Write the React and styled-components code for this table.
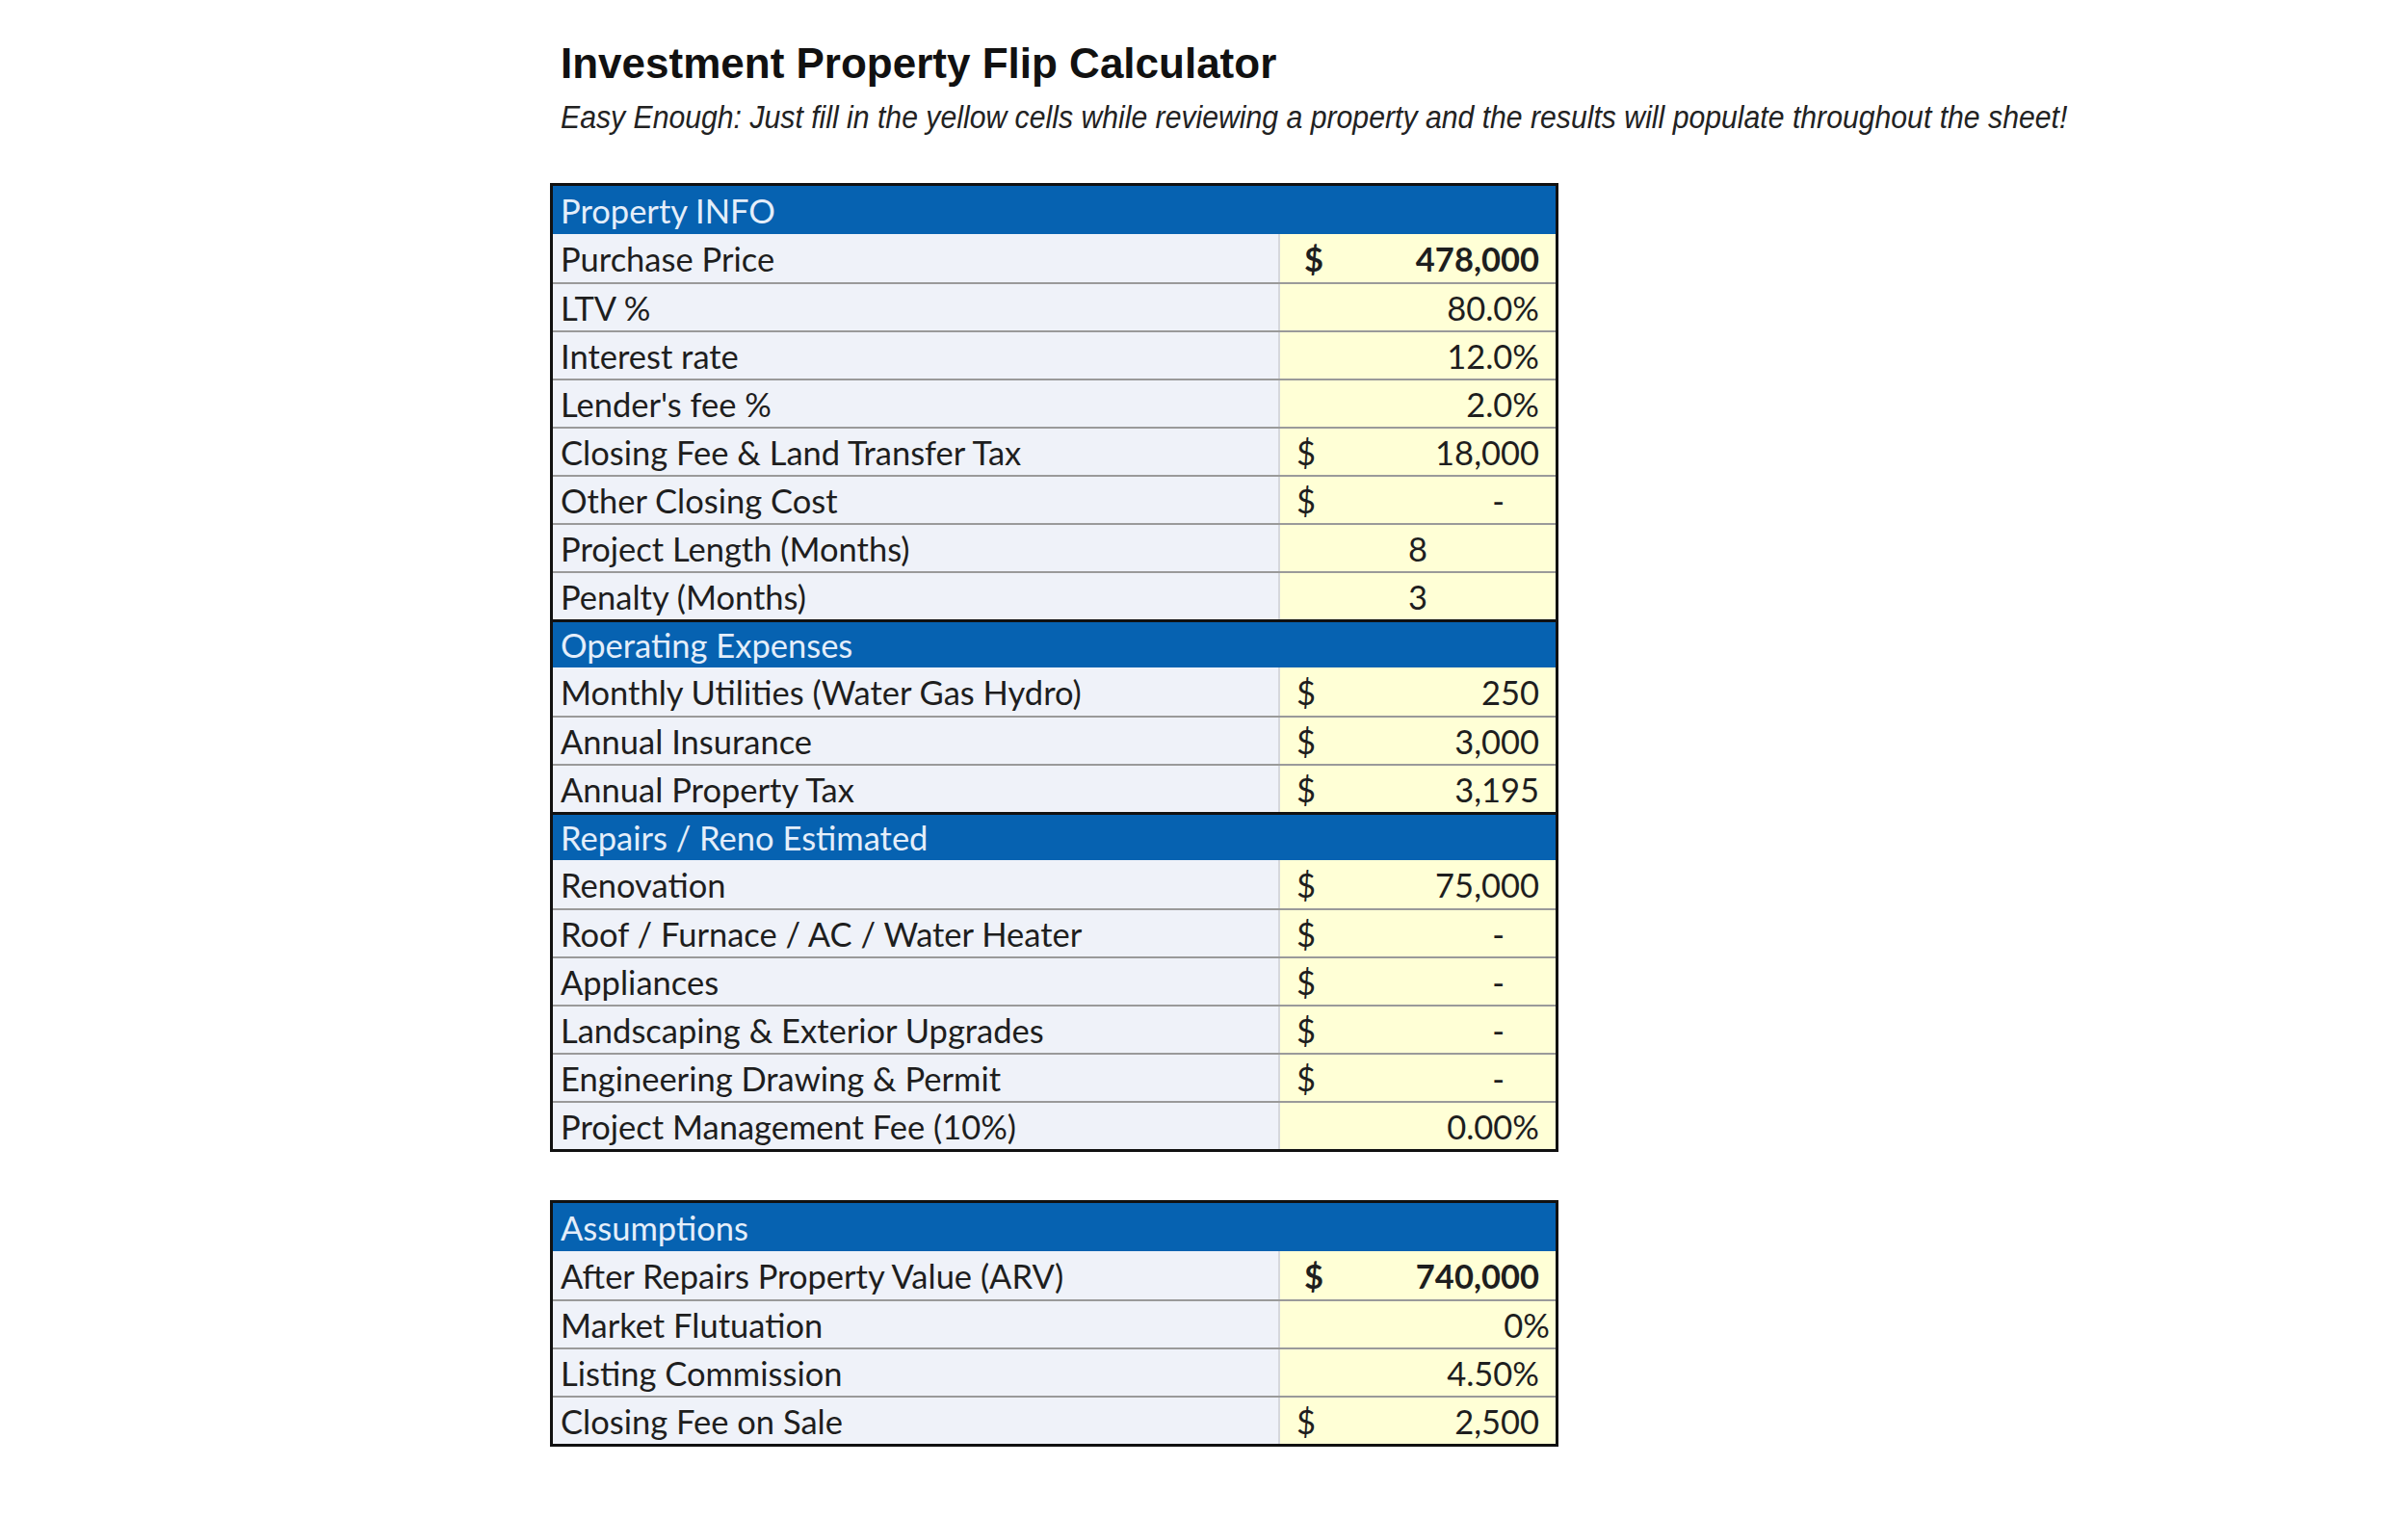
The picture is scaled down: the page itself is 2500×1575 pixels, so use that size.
import React from 'react';
import styled, { createGlobalStyle } from 'styled-components';

const GlobalStyle = createGlobalStyle`
  html, body {
    margin: 0;
    padding: 0;
    background: #ffffff;
  }
`;

const Page = styled.div`
  width: 2500px;
  min-height: 1575px;
  box-sizing: border-box;
  padding: 40px 0 0 571px;
  background: #ffffff;
  color: #1a1a1a;
`;

const Title = styled.h1`
  margin: 0 0 0 11px;
  font-family: 'Liberation Sans', Arial, sans-serif;
  font-weight: 700;
  font-size: 44px;
  line-height: 52px;
  color: #111;
`;

// the sheet uses a narrow italic; no narrow face installed, so squeeze the regular one
const Subtitle = styled.p`
  margin: 10px 0 0 11px;
  font-family: 'Liberation Sans Narrow', 'Liberation Sans', Arial, sans-serif;
  font-style: italic;
  font-size: 33px;
  line-height: 40px;
  color: #222;
  white-space: nowrap;
  transform: scaleX(0.915);
  transform-origin: left center;
`;

const Sheet = styled.div`
  width: 1047px;
  box-sizing: border-box;
  margin-top: ${p => p.$top}px;
  border: 3px solid #111;
  font-family: Lato, 'Open Sans', sans-serif;
  font-size: 34.5px;
`;

const SectionHead = styled.div`
  height: 50px;
  box-sizing: border-box;
  display: flex;
  align-items: center;
  padding-left: 8px;
  background: #0662b1;
  color: #e4eefa;
  border-top: ${p => (p.$first ? 'none' : '3px solid #111')};
`;

const Row = styled.div`
  display: grid;
  grid-template-columns: 755px 1fr;
  height: 50px;
  border-top: ${p => (p.$afterHead ? 'none' : '2px solid #9a9a9a')};
  box-sizing: border-box;
`;

const Label = styled.div`
  display: flex;
  align-items: center;
  padding-left: 8px;
  background: #eff2f9;
  border-right: 2px solid #d6d8dc;
  color: #1e1e1e;
  white-space: nowrap;
`;

const ValueCell = styled.div`
  display: flex;
  align-items: center;
  justify-content: ${p => (p.$center ? 'center' : 'space-between')};
  padding: 0 ${p => (p.$tight ? 6 : 17)}px 0 ${p => (p.$bold ? 25 : 17)}px;
  background: #ffffd6;
  color: #1e1e1e;
  font-weight: ${p => (p.$bold ? 700 : 400)};
`;

const Currency = styled.span``;

const Amount = styled.span`
  margin-left: auto;
  margin-right: ${p => (p.$dash ? 36 : 0)}px;
`;

const sections = [
  {
    title: 'Property INFO',
    rows: [
      { label: 'Purchase Price', cur: true, value: '478,000', bold: true },
      { label: 'LTV %', value: '80.0%' },
      { label: 'Interest rate', value: '12.0%' },
      { label: "Lender's fee %", value: '2.0%' },
      { label: 'Closing Fee & Land Transfer Tax', cur: true, value: '18,000' },
      { label: 'Other Closing Cost', cur: true, value: '-', dash: true },
      { label: 'Project Length (Months)', value: '8', center: true },
      { label: 'Penalty (Months)', value: '3', center: true },
    ],
  },
  {
    title: 'Operating Expenses',
    rows: [
      { label: 'Monthly Utilities (Water Gas Hydro)', cur: true, value: '250' },
      { label: 'Annual Insurance', cur: true, value: '3,000' },
      { label: 'Annual Property Tax', cur: true, value: '3,195' },
    ],
  },
  {
    title: 'Repairs / Reno Estimated',
    rows: [
      { label: 'Renovation', cur: true, value: '75,000' },
      { label: 'Roof / Furnace / AC / Water Heater', cur: true, value: '-', dash: true },
      { label: 'Appliances', cur: true, value: '-', dash: true },
      { label: 'Landscaping & Exterior Upgrades', cur: true, value: '-', dash: true },
      { label: 'Engineering Drawing & Permit', cur: true, value: '-', dash: true },
      { label: 'Project Management Fee (10%)', value: '0.00%' },
    ],
  },
];

const assumptions = [
  {
    title: 'Assumptions',
    rows: [
      { label: 'After Repairs Property Value (ARV)', cur: true, value: '740,000', bold: true },
      { label: 'Market Flutuation', value: '0%', tight: true },
      { label: 'Listing Commission', value: '4.50%' },
      { label: 'Closing Fee on Sale', cur: true, value: '2,500' },
    ],
  },
];

const renderSections = list =>
  list.map((section, si) => (
    <React.Fragment key={section.title}>
      <SectionHead $first={si === 0}>{section.title}</SectionHead>
      {section.rows.map((row, ri) => (
        <Row key={row.label} $afterHead={ri === 0}>
          <Label>{row.label}</Label>
          <ValueCell $center={row.center} $bold={row.bold} $tight={row.tight}>
            {row.cur && <Currency>$</Currency>}
            {row.center ? row.value : <Amount $dash={row.dash}>{row.value}</Amount>}
          </ValueCell>
        </Row>
      ))}
    </React.Fragment>
  ));

export default function App() {
  return (
    <Page>
      <GlobalStyle />
      <Title>Investment Property Flip Calculator</Title>
      <Subtitle>
        Easy Enough: Just fill in the yellow cells while reviewing a property and the results will populate throughout the sheet!
      </Subtitle>
      <Sheet $top={48}>{renderSections(sections)}</Sheet>
      <Sheet $top={50}>{renderSections(assumptions)}</Sheet>
    </Page>
  );
}
